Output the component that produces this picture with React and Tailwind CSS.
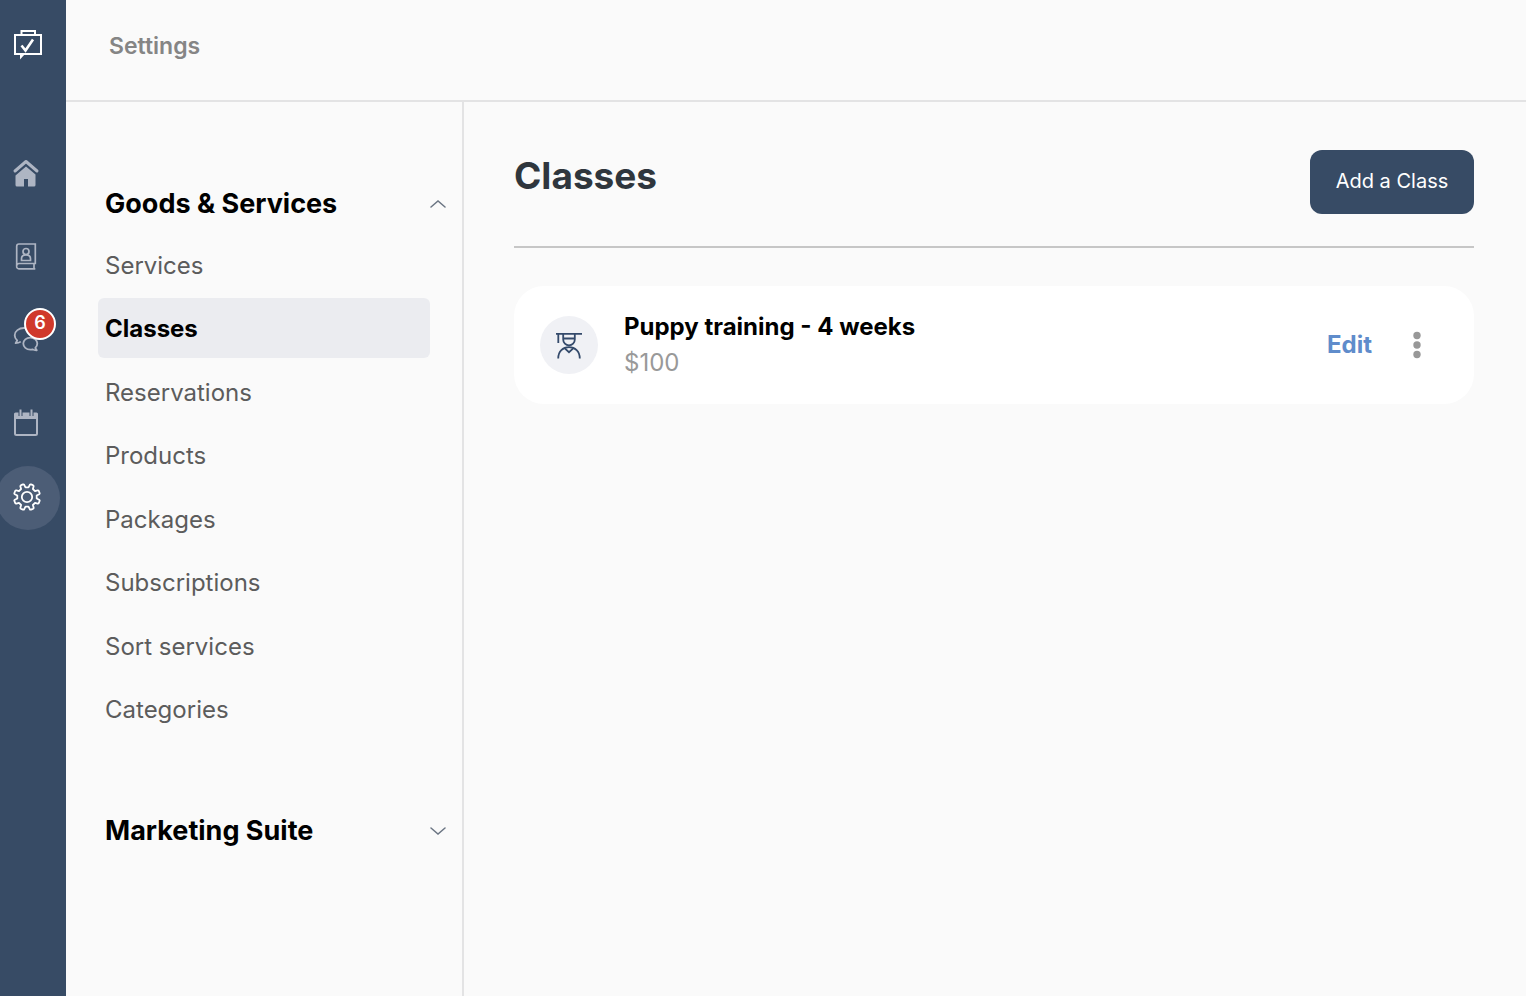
import { useState } from "react"
import clsx from "clsx"

const goods = [
  "Services",
  "Classes",
  "Reservations",
  "Products",
  "Packages",
  "Subscriptions",
  "Sort services",
  "Categories",
]

function LogoIcon() {
  return (
    <svg viewBox="0 0 32 32" className="h-8 w-8" fill="none" stroke="currentColor" strokeWidth="2">
      <path d="M3 7h26v19H3z" />
      <path d="M9.500 7V3h13.500v4" />
      <path d="M8 26v5.500l5-5.500z" fill="currentColor" stroke="none" />
      <path d="M9.500 17.500l4 5 7.500-11" strokeWidth="2.600" />
    </svg>
  )
}

function HomeIcon() {
  return (
    <svg viewBox="0 0 28 28" className="h-7 w-7" fill="none" stroke="currentColor">
      <path d="M3 12L14 2.500 25 12" strokeWidth="3" strokeLinecap="round" strokeLinejoin="round" />
      <path
        d="M14 7.500l9.500 8V26a1.500 1.500 0 0 1-1.500 1.500h-6V20h-4v7.500H5A1.500 1.500 0 0 1 3.500 26V16.500z"
        fill="currentColor"
        stroke="none"
      />
    </svg>
  )
}

function ContactsIcon() {
  return (
    <svg viewBox="0 0 28 28" className="h-7 w-7" fill="none" stroke="currentColor" strokeWidth="1.700">
      <path d="M7 2h16.300v19.500H7A2.300 2.300 0 0 0 4.700 24V4.300A2.300 2.300 0 0 1 7 2z" />
      <path d="M4.700 24A2.300 2.300 0 0 0 7 26.800h16.300M22 21.500v5.300" />
      <circle cx="14" cy="9.500" r="3" />
      <path d="M9.500 18.500v-1.700c0-2.500 1.900-4 4.500-4s4.500 1.500 4.500 4v1.700z" />
    </svg>
  )
}

function ChatIcon() {
  return (
    <svg viewBox="0 0 28 28" className="h-7 w-7" fill="none" stroke="currentColor" strokeWidth="1.800" strokeLinejoin="round">
      <path d="M16 3.800C14.800 3.200 13.300 3 12 3 6.800 3 2.700 6.200 2.700 10.300c0 2.200 1 3.900 2.500 5.200L3.600 18.200c2.100 0 3.900-.600 5.200-1.600" />
      <path d="M18.300 12.600c4 0 7 2.700 7 6 0 1.700-.700 3.200-2 4.300l1.500 2.400c-1.700.100-3.200-.300-4.400-1-.700.200-1.400.300-2.100.300-4 0-7-2.700-7-6s3-6 7-6z" />
    </svg>
  )
}

function CalendarIcon() {
  return (
    <svg viewBox="0 0 28 28" className="h-7 w-7" fill="none" stroke="currentColor">
      <rect x="3" y="6" width="22" height="21" rx="1.500" strokeWidth="2" />
      <path d="M2 6a1.500 1.500 0 0 1 1.500-1.500h21A1.500 1.500 0 0 1 26 6v5H2z" fill="currentColor" stroke="none" />
      <path d="M8.500 1.500v6.500M19.500 1.500v6.500" stroke="#374b65" strokeWidth="4" />
      <path d="M8.500 1.500v7M19.500 1.500v7" strokeWidth="2" />
    </svg>
  )
}

function GearIcon() {
  return (
    <svg viewBox="0 0 28 28" className="h-7 w-7" fill="none" stroke="currentColor" strokeWidth="1.800" strokeLinejoin="round">
      <circle cx="14" cy="14" r="5.200" />
      <path d="M12.500 4.300h3L16.800 1.800Q17.200 1.100 18 1.400L20 2.200Q20.800 2.600 20.600 3.400L19.900 6 22 8.100 24.600 7.400Q25.400 7.200 25.800 8L26.600 10Q26.900 10.800 26.200 11.200L23.700 12.500v3L26.200 16.800Q26.900 17.200 26.600 18L25.800 20Q25.400 20.800 24.600 20.600L22 19.900 19.900 22 20.600 24.600Q20.800 25.400 20 25.800L18 26.600Q17.200 26.900 16.800 26.200L15.500 23.700h-3L11.200 26.200Q10.800 26.900 10 26.600L8 25.800Q7.200 25.400 7.400 24.600L8.100 22 6 19.900 3.400 20.600Q2.600 20.800 2.200 20L1.400 18Q1.100 17.200 1.800 16.800L4.300 15.500v-3L1.800 11.200Q1.100 10.800 1.400 10L2.200 8Q2.600 7.200 3.400 7.400L6 8.100 8.100 6 7.400 3.400Q7.200 2.600 8 2.200L10 1.400Q10.800 1.100 11.200 1.800z" />
    </svg>
  )
}

function TrainingIcon() {
  return (
    <svg viewBox="0 0 28 28" className="h-7 w-7" fill="none" stroke="currentColor" strokeWidth="1.800">
      <path d="M1 2.800h26M3.300 3v9M8.200 3v5.500a5.800 5.800 0 0 0 11.600 0V3M8.200 7.500h11.600" />
      <path d="M3.200 27.500C3.200 20 8 16.200 14 16.200s10.800 3.800 10.800 11.300" />
      <path d="M9.500 17.200l4.500 4 4.500-4" />
    </svg>
  )
}

function Chevron({ open }) {
  return (
    <svg viewBox="0 0 16 8" className="h-2 w-4 text-[#6b7583]" fill="none" stroke="currentColor" strokeWidth="1.500" strokeLinecap="round">
      <path d={open ? "M1 7l7-6 7 6" : "M1 1l7 6 7-6"} />
    </svg>
  )
}

function SectionToggle({ title, open, onClick }) {
  return (
    <button
      type="button"
      aria-expanded={open}
      onClick={onClick}
      className="flex h-10 w-full items-center justify-between pr-4 pl-[39px] text-left text-[27px] font-bold text-black"
    >
      {title}
      <Chevron open={open} />
    </button>
  )
}

function Sidebar() {
  const item = "flex h-[83px] w-full items-center pl-3 text-[#aeb5c3]"

  return (
    <nav aria-label="Main" className="flex w-[66px] shrink-0 flex-col overflow-hidden bg-[#374b65]">
      <a href="#" aria-label="Dashboard" className="mt-7 mb-[71px] pl-3 text-white">
        <LogoIcon />
      </a>
      <a href="#home" aria-label="Home" className={item}>
        <HomeIcon />
      </a>
      <a href="#contacts" aria-label="Contacts" className={item}>
        <ContactsIcon />
      </a>
      <a href="#messages" aria-label="Messages" className={clsx(item, "relative")}>
        <ChatIcon />
        <span className="absolute top-[11px] left-6 flex h-8 w-8 items-center justify-center rounded-full border-2 border-white bg-[#d0392b] pb-0.5 text-lg font-semibold text-white">
          6
        </span>
      </a>
      <a href="#calendar" aria-label="Calendar" className={item}>
        <CalendarIcon />
      </a>
      <a
        href="#settings"
        aria-label="Settings"
        className="mt-[3px] -ml-1 flex h-16 w-16 items-center justify-center rounded-full bg-[#4c5d76] pr-0.5 pb-0.5 text-white"
      >
        <GearIcon />
      </a>
    </nav>
  )
}

export default function App() {
  const [goodsOpen, setGoodsOpen] = useState(true)
  const [marketingOpen, setMarketingOpen] = useState(false)
  const [active, setActive] = useState("Classes")

  return (
    <div className="flex min-h-screen bg-[#fafafa] font-[Inter,sans-serif]">
      <Sidebar />

      <div className="flex min-w-0 flex-1 flex-col">
        <header className="flex h-[102px] items-center border-b-2 border-[#e3e3e4] pb-2 pl-[43px] text-[23px] font-semibold text-[#858585]">
          Settings
        </header>

        <div className="flex flex-1">
          <aside className="w-[398px] shrink-0 border-r-2 border-[#e3e3e4] pt-[82px]">
            <SectionToggle
              title="Goods & Services"
              open={goodsOpen}
              onClick={() => setGoodsOpen((prev) => !prev)}
            />

            {goodsOpen && (
              <ul className="mt-[11px] flex h-[504px] flex-col justify-between pr-8 pl-8">
                {goods.map((name) => (
                  <li key={name}>
                    <a
                      href="#settings"
                      onClick={() => setActive(name)}
                      className={clsx(
                        "flex h-[60px] items-center rounded-md pt-0.5 pl-[7px] text-2xl",
                        active === name ? "bg-[#ebecf0] font-bold text-black" : "text-[#5c5c5c]"
                      )}
                    >
                      {name}
                    </a>
                  </li>
                ))}
              </ul>
            )}

            <div className="mt-[72px]">
              <SectionToggle
                title="Marketing Suite"
                open={marketingOpen}
                onClick={() => setMarketingOpen((prev) => !prev)}
              />
            </div>
          </aside>

          <main className="min-w-0 flex-1 pt-12 pr-[52px] pl-[50px]">
            <div className="flex items-start justify-between border-b-2 border-[#c6c6c6] pb-8">
              <h1 className="mt-0.5 text-[37px] leading-[48px] font-bold text-[#2f363d]">Classes</h1>
              <button
                type="button"
                className="h-16 w-[164px] rounded-xl bg-[#374b65] pb-0.5 text-xl text-white"
              >
                Add a Class
              </button>
            </div>

            {/* class list */}
            <div className="mt-[38px] flex items-center rounded-[30px] bg-white py-[23px] pr-12 pl-[26px]">
              <div className="flex h-[58px] w-[58px] items-center justify-center rounded-full bg-[#f0f1f5] text-[#344a6b]">
                <TrainingIcon />
              </div>
              <div className="ml-[26px] flex-1">
                <h2 className="h-9 text-2xl leading-9 font-bold text-black">Puppy training - 4 weeks</h2>
                <p className="h-9 text-2xl leading-9 text-[#999999]">$100</p>
              </div>
              <a href="#edit" className="text-2xl font-bold text-[#5f8ccb]">
                Edit
              </a>
              <button type="button" aria-label="More options" className="ml-9 text-[#989898]">
                <svg viewBox="0 0 18 28" className="h-7 w-[18px]" fill="currentColor">
                  <circle cx="9" cy="4.500" r="3.700" />
                  <circle cx="9" cy="14" r="3.700" />
                  <circle cx="9" cy="23.500" r="3.700" />
                </svg>
              </button>
            </div>
          </main>
        </div>
      </div>
    </div>
  )
}
